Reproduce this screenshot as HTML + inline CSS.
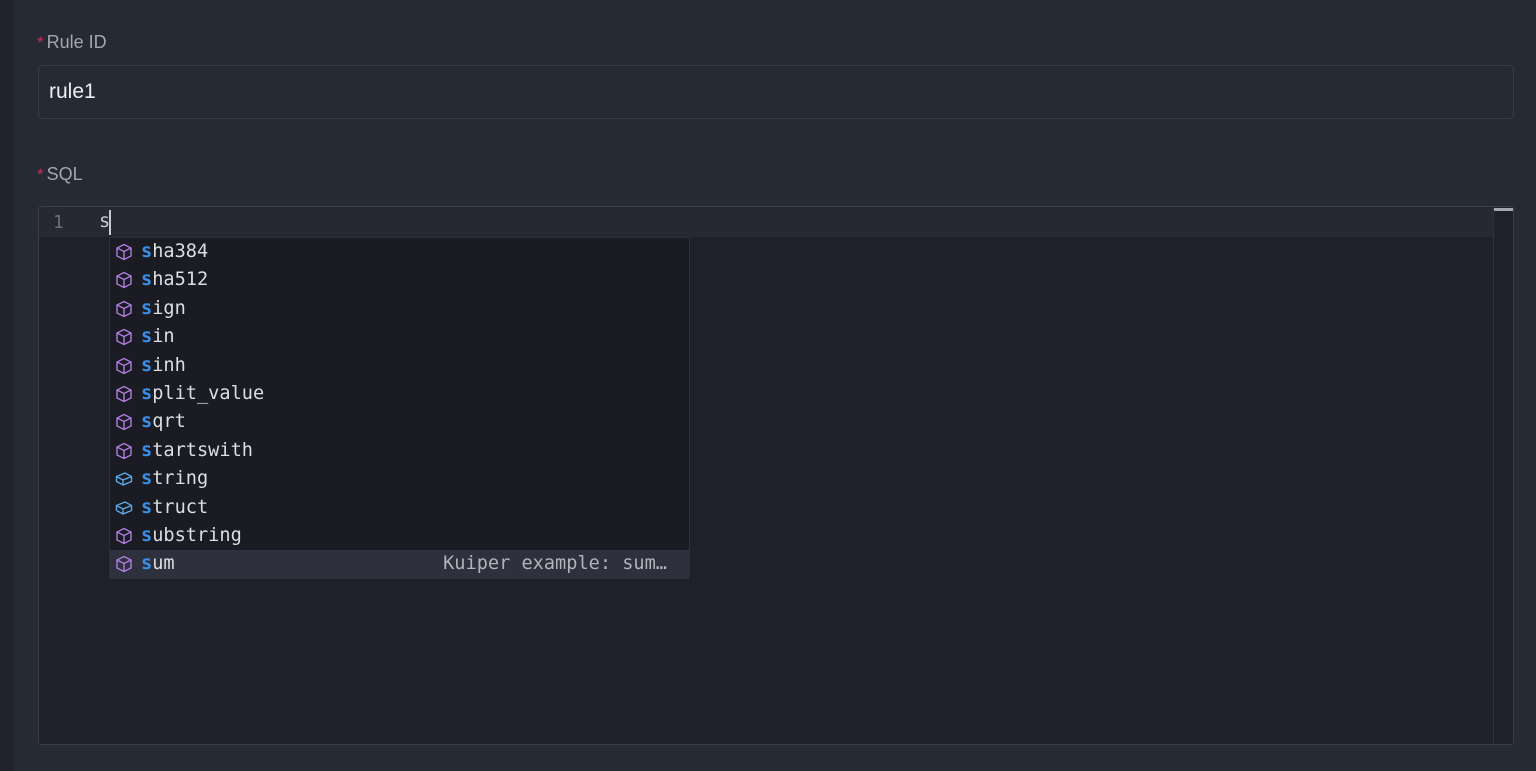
<!DOCTYPE html>
<html><head><style>
*{margin:0;padding:0;box-sizing:border-box}
body{width:1536px;height:771px;background:#262a34;position:relative;overflow:hidden;font-family:"Liberation Sans",sans-serif}
.strip{position:absolute;left:0;top:0;width:14px;height:771px;background:#21242d}
.lbl{position:absolute;left:37px;font-size:18px;color:#a3a6ad}
.lbl b{color:#c3305a;font-weight:normal;font-size:17px;margin-right:3px;position:relative;top:0px}
.inp{position:absolute;left:38px;top:65px;width:1476px;height:54px;border:1px solid #383c47;border-radius:4px;background:#262a34;color:#eceef2;font-size:21px;padding:14px 10px}
.ed{position:absolute;left:38px;top:206px;width:1476px;height:539px;border:1px solid #3a3e49;border-radius:3px;background:#1f212a;overflow:hidden}
.cur{position:absolute;left:0;top:0;width:1454px;height:30px;background:#262933}
.ln{position:absolute;left:14px;top:5px;color:#6a6e78;font:18px "DejaVu Sans Mono",monospace}
.code{position:absolute;left:60px;top:4px;color:#c7cad1;font:18.5px "DejaVu Sans Mono",monospace}
.caret{position:absolute;left:70px;top:3px;width:2px;height:25px;background:#c7cad1}
.sb{position:absolute;left:1454px;top:0;width:1px;height:539px;background:#2e313b}
.sbt{position:absolute;left:1455px;top:1px;width:19px;height:3px;background:#a5a7b0}
.dd{position:absolute;left:109px;top:237px;width:581px;height:340px;background:#1a1b23;border:1px solid #2c2e38}
.row{height:28.4px;line-height:28.4px;font:18.6px/28.4px "DejaVu Sans Mono",monospace;color:#dcdee3;padding-left:31px;position:relative;white-space:pre}
.row b{color:#3a8ee6}
.row svg{position:absolute;left:5px;top:5px}
.sel{background:#2e303d}
.det{position:absolute;right:22px;top:0;color:#b0b3ba}
</style></head><body>
<div class="strip"></div>
<div class="lbl" style="top:32px"><b>*</b>Rule ID</div>
<div class="inp">rule1</div>
<div class="lbl" style="top:164px"><b>*</b>SQL</div>
<div class="ed">
<div class="cur"></div>
<div class="ln">1</div>
<div class="code">s</div>
<div class="caret"></div>
<div class="sb"></div><div class="sbt"></div>
</div>
<div class="dd">
<div class="row"><svg width="18" height="18" viewBox="0 0 18 18" fill="none" stroke="#b07ee0" stroke-width="1.4"><path d="M9 1.5L16 5v8l-7 3.5L2 13V5z M2 5l7 3.5L16 5 M9 8.5v8"/></svg><b>s</b>ha384</div>
<div class="row"><svg width="18" height="18" viewBox="0 0 18 18" fill="none" stroke="#b07ee0" stroke-width="1.4"><path d="M9 1.5L16 5v8l-7 3.5L2 13V5z M2 5l7 3.5L16 5 M9 8.5v8"/></svg><b>s</b>ha512</div>
<div class="row"><svg width="18" height="18" viewBox="0 0 18 18" fill="none" stroke="#b07ee0" stroke-width="1.4"><path d="M9 1.5L16 5v8l-7 3.5L2 13V5z M2 5l7 3.5L16 5 M9 8.5v8"/></svg><b>s</b>ign</div>
<div class="row"><svg width="18" height="18" viewBox="0 0 18 18" fill="none" stroke="#b07ee0" stroke-width="1.4"><path d="M9 1.5L16 5v8l-7 3.5L2 13V5z M2 5l7 3.5L16 5 M9 8.5v8"/></svg><b>s</b>in</div>
<div class="row"><svg width="18" height="18" viewBox="0 0 18 18" fill="none" stroke="#b07ee0" stroke-width="1.4"><path d="M9 1.5L16 5v8l-7 3.5L2 13V5z M2 5l7 3.5L16 5 M9 8.5v8"/></svg><b>s</b>inh</div>
<div class="row"><svg width="18" height="18" viewBox="0 0 18 18" fill="none" stroke="#b07ee0" stroke-width="1.4"><path d="M9 1.5L16 5v8l-7 3.5L2 13V5z M2 5l7 3.5L16 5 M9 8.5v8"/></svg><b>s</b>plit_value</div>
<div class="row"><svg width="18" height="18" viewBox="0 0 18 18" fill="none" stroke="#b07ee0" stroke-width="1.4"><path d="M9 1.5L16 5v8l-7 3.5L2 13V5z M2 5l7 3.5L16 5 M9 8.5v8"/></svg><b>s</b>qrt</div>
<div class="row"><svg width="18" height="18" viewBox="0 0 18 18" fill="none" stroke="#b07ee0" stroke-width="1.4"><path d="M9 1.5L16 5v8l-7 3.5L2 13V5z M2 5l7 3.5L16 5 M9 8.5v8"/></svg><b>s</b>tartswith</div>
<div class="row"><svg width="18" height="18" viewBox="0 0 18 18" fill="none" stroke="#5aa8e8" stroke-width="1.4"><path d="M1.5 6.5L10 3l6.5 3.5v5L8 15l-6.5-3.5z M1.5 6.5L8 10l8.5-3.5 M8 10v5"/></svg><b>s</b>tring</div>
<div class="row"><svg width="18" height="18" viewBox="0 0 18 18" fill="none" stroke="#5aa8e8" stroke-width="1.4"><path d="M1.5 6.5L10 3l6.5 3.5v5L8 15l-6.5-3.5z M1.5 6.5L8 10l8.5-3.5 M8 10v5"/></svg><b>s</b>truct</div>
<div class="row"><svg width="18" height="18" viewBox="0 0 18 18" fill="none" stroke="#b07ee0" stroke-width="1.4"><path d="M9 1.5L16 5v8l-7 3.5L2 13V5z M2 5l7 3.5L16 5 M9 8.5v8"/></svg><b>s</b>ubstring</div>
<div class="row sel"><svg width="18" height="18" viewBox="0 0 18 18" fill="none" stroke="#b07ee0" stroke-width="1.4"><path d="M9 1.5L16 5v8l-7 3.5L2 13V5z M2 5l7 3.5L16 5 M9 8.5v8"/></svg><b>s</b>um<span class="det">Kuiper example: sum…</span></div>
</div>
</body></html>
